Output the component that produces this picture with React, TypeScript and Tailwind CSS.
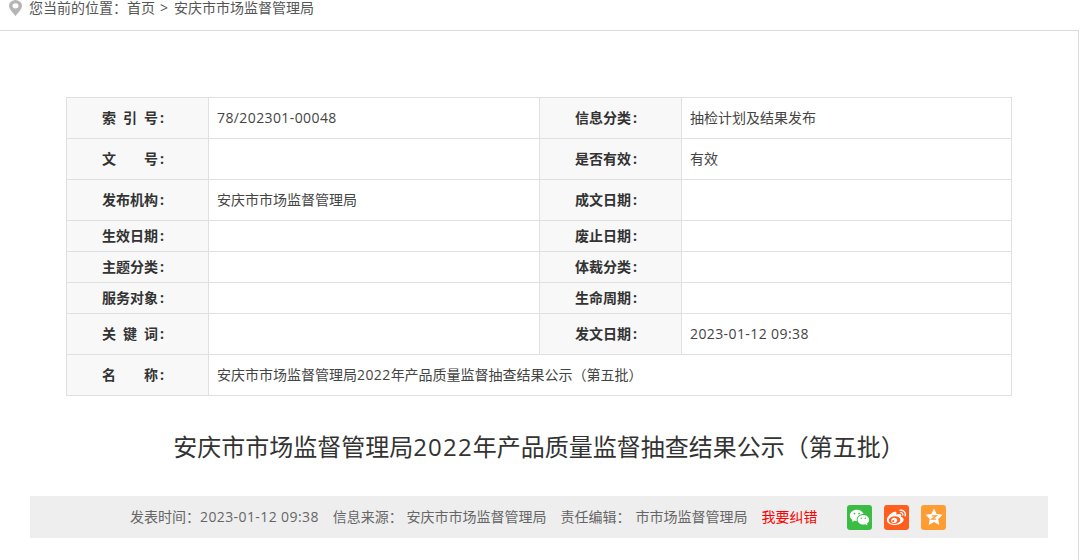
import { RiWechatFill, RiWeiboFill } from 'react-icons/ri'

const rows = [
  { h: 'h-[41px]', a: '索\u2002引\u2002号', b: '78/202301-00048', c: '信息分类', d: '抽检计划及结果发布' },
  { h: 'h-[41px]', a: '文\u3000\u3000号', b: '', c: '是否有效', d: '有效' },
  { h: 'h-[41px]', a: '发布机构', b: '安庆市市场监督管理局', c: '成文日期', d: '' },
  { h: 'h-[31px]', a: '生效日期', b: '', c: '废止日期', d: '' },
  { h: 'h-[31px]', a: '主题分类', b: '', c: '体裁分类', d: '' },
  { h: 'h-[31px]', a: '服务对象', b: '', c: '生命周期', d: '' },
  { h: 'h-[41px]', a: '关\u2002键\u2002词', b: '', c: '发文日期', d: '2023-01-12 09:38' },
]

const labelCls = 'border border-[#e0e0e0] bg-[#f8f8f8] pl-[35px] text-left text-sm font-bold whitespace-pre text-[#333]'
const valueCls = 'border border-[#e0e0e0] pl-[8px] text-left text-sm font-normal text-[#444]'

function Label({ text }: { text: string }) {
  return (
    <>
      {text}
      <span className="ml-[2px]">:</span>
    </>
  )
}

function Num({ children }: { children: string }) {
  return <span className="tracking-[0.4px]">{children}</span>
}

export default function App() {
  return (
    <div className="h-[560px] overflow-hidden bg-white font-['Open_Sans','Noto_Sans_CJK_SC',sans-serif] text-[#444]">
      {/* Breadcrumb */}
      <div className="flex h-[16px] items-center pl-[9px] text-sm leading-[16px] text-[#555]">
        <svg viewBox="0.5 0 13 18" preserveAspectRatio="none" className="mr-[7px] h-[16px] w-[13px]">
          <path
            fillRule="evenodd"
            fill="#b5b5b5"
            d="M7 0a6.500 6.500 0 0 1 6.500 6.500C13.500 10.500 9 15 7 18 5 15 .5 10.500.5 6.500A6.500 6.500 0 0 1 7 0Zm0 3.600a3 3 0 1 0 0 6 3 3 0 0 0 0-6Z"
          />
        </svg>
        <span>您当前的位置：首页</span>
        <span className="ml-[5px]">&gt;</span>
        <span className="ml-[6px]">安庆市市场监督管理局</span>
      </div>

      <div className="mt-[14px] h-[600px] w-[1079px] border-t border-r border-[#dcdcdc] pt-[66px]">
        <table className="ml-[66px] w-[945px] table-fixed border-collapse">
          <colgroup>
            <col className="w-[142px]" />
            <col className="w-[331px]" />
            <col className="w-[142px]" />
            <col className="w-[330px]" />
          </colgroup>
          <tbody>
            {rows.map((r) => (
              <tr key={r.a} className={r.h}>
                <th className={labelCls}>
                  <Label text={r.a} />
                </th>
                <td className={valueCls}>{r.b && /\d/.test(r.b) ? <Num>{r.b}</Num> : r.b}</td>
                <th className={labelCls}>
                  <Label text={r.c} />
                </th>
                <td className={valueCls}>{r.d && /\d/.test(r.d) ? <Num>{r.d}</Num> : r.d}</td>
              </tr>
            ))}
            <tr className="h-[41px]">
              <th className={labelCls}>
                <Label text={'名\u3000\u3000称'} />
              </th>
              <td colSpan={3} className={valueCls}>
                安庆市市场监督管理局<Num>2022</Num>年产品质量监督抽查结果公示（第五批）
              </td>
            </tr>
          </tbody>
        </table>

        <h1 className="mt-[33px] text-center text-2xl leading-[36px] font-normal text-[#333]">
          安庆市市场监督管理局<span className="tracking-[1.2px]">2022</span>年产品质量监督抽查结果公示（第五批）
        </h1>

        <div className="mt-[31px] ml-[30px] flex h-[42px] w-[1018px] items-center bg-[#eee] pl-[100px] text-sm text-[#666]">
          <span>
            发表时间：<Num>2023-01-12 09:38</Num>
          </span>
          <span className="ml-[14px]">信息来源： 安庆市市场监督管理局</span>
          <span className="ml-[14px]">责任编辑：</span>
          <span className="ml-[5px]">市市场监督管理局</span>
          <span className="ml-[14px] text-[#f00]">我要纠错</span>
          <div className="ml-[30px] flex gap-[12px]">
            <div className="flex h-[25px] w-[25px] items-center justify-center rounded-[3px] bg-[#3bbd45] text-white">
              <RiWechatFill size={21} />
            </div>
            <div className="flex h-[25px] w-[25px] items-center justify-center rounded-[3px] bg-[#ff5e1f] text-white">
              <RiWeiboFill size={21} />
            </div>
            <div className="flex h-[25px] w-[25px] items-center justify-center rounded-[3px] bg-[#ff9d33]">
              <svg viewBox="0 0 20 20" className="h-[20px] w-[20px]">
                <path
                  fill="#fff"
                  d="M10 1.500l2.600 5.500 6 .8-4.400 4.100 1.100 6L10 15l-5.300 2.900 1.100-6L1.400 7.800l6-.8z"
                />
                <path fill="none" stroke="#ff9d33" strokeWidth="1.300" d="M7.800 8.800h4.400l-4.400 3.400h4.400" />
              </svg>
            </div>
          </div>
        </div>
      </div>
    </div>
  )
}
